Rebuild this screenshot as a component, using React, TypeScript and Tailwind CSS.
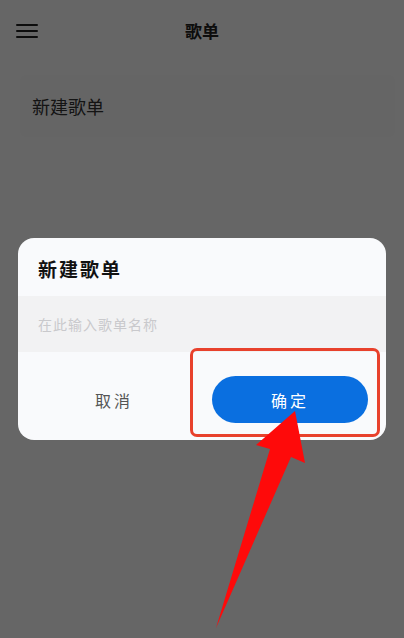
import React from 'react';

const font = { fontFamily: '"Noto Sans CJK SC", "Noto Sans", sans-serif' };

export default function App() {
  return (
    <div className="relative h-[638px] w-[404px] overflow-hidden bg-white" style={font}>
      {/* page behind the dialog */}
      <div className="flex h-[62px] items-center px-4">
        <div className="flex w-[22px] flex-col gap-[3.5px]">
          <span className="h-[2.5px] w-full rounded-full bg-[#222]" />
          <span className="h-[2.5px] w-full rounded-full bg-[#222]" />
          <span className="h-[2.5px] w-full rounded-full bg-[#222]" />
        </div>
        <h1 className="flex-1 pr-[22px] text-center text-[17px] font-bold text-[#222]">歌单</h1>
      </div>
      <div className="ml-[20px] mr-[9px] mt-[13px] flex h-[62px] items-center rounded-md bg-[#fcfcfc] px-3">
        <span className="text-[18px] text-[#333]">新建歌单</span>
      </div>

      {/* overlay + dialog */}
      <div className="absolute inset-0 flex flex-col bg-black/60 px-[18px] pt-[238px]">
        <div className="overflow-hidden rounded-[16px] bg-[#f9fafc]">
          <div className="flex h-[58px] items-center px-5 pt-1">
            <span className="text-[19px] font-bold tracking-[2px] text-[#111]">新建歌单</span>
          </div>
          <div className="flex h-[56px] items-center bg-[#f2f2f3] px-5">
            <span className="text-[14px] tracking-[1px] text-[#c9c9cc]">在此输入歌单名称</span>
          </div>
          <div className="flex h-[88px] items-center gap-[20px] px-[18px] pt-[7px]">
            <button className="flex h-[46px] flex-1 items-center justify-center text-[16px] tracking-[3px] text-[#555]">
              取消
            </button>
            <button className="flex h-[47px] flex-1 items-center justify-center rounded-full bg-[#0a6fe0] text-[16px] tracking-[3px] text-white">
              确定
            </button>
          </div>
        </div>
      </div>

      {/* annotation box */}
      <div className="absolute left-[190px] top-[348px] h-[89px] w-[190px] rounded-[7px] border-[3.5px] border-[#e8412c]" />

      {/* annotation arrow */}
      <svg className="absolute left-0 top-0" width="404" height="638" viewBox="0 0 404 638">
        <polygon
          points="295,411 305,463 291,457 216,628 270,449 256,445"
          fill="#fe0a0a"
        />
      </svg>
    </div>
  );
}
